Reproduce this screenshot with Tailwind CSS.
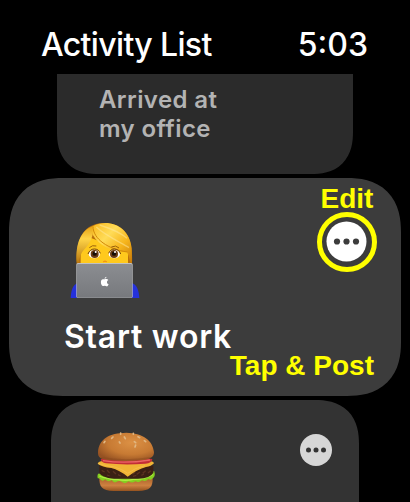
<!DOCTYPE html>
<html lang="en">

<head>
  <meta charset="UTF-8" />
  <meta name="viewport" content="width=device-width, initial-scale=1" />
  <title>Activity List</title>
  <script src="https://cdn.jsdelivr.net/npm/@tailwindcss/browser@4"></script>
</head>

<body class="bg-black font-['Inter',sans-serif]">
  <div class="w-[410px] h-[502px] overflow-hidden flex flex-col items-center">
    <header class="w-full h-[74px] shrink-0 flex justify-between pl-[41px] pr-[42px] pt-[25px] text-white font-medium text-[32px] leading-[40px] whitespace-nowrap">
      <h1 class="tracking-[-0.65px]">Activity List</h1>
      <time>5:03</time>
    </header>

    <main class="flex flex-col items-center gap-1 w-full">
      <!-- previous card -->
      <section class="w-[296px] h-[100px] shrink-0 bg-[#2b2b2b] rounded-b-[42px] [corner-shape:superellipse(1.25)] pl-[42px] pt-[11px]">
        <p class="text-[#b3b3b3] font-semibold text-[24px] leading-[29px] tracking-[0.4px] [font-variant-ligatures:none]">Arrived at<br />my office</p>
      </section>

      <!-- current card -->
      <section class="w-[392px] h-[218px] shrink-0 bg-[#3c3c3c] rounded-[54px] [corner-shape:superellipse(1.25)] flex flex-col">
        <div class="flex justify-between pl-[61px] pr-[24px] h-[134px]">
          <svg class="w-[70px] h-[76px] mt-[44px]" viewBox="30 36 210 228">
            <defs>
              <linearGradient id="hair" x1="0" y1="0" x2="1" y2="1">
                <stop offset="0" stop-color="#f9b91d" />
                <stop offset=".35" stop-color="#ffdc58" />
                <stop offset=".65" stop-color="#f6b51c" />
                <stop offset="1" stop-color="#c77908" />
              </linearGradient>
              <linearGradient id="hairLeft" x1="0" y1="0" x2="0" y2="1">
                <stop offset="0" stop-color="#e5a014" />
                <stop offset=".35" stop-color="#ffd447" />
                <stop offset="1" stop-color="#b97910" />
              </linearGradient>
              <linearGradient id="lid" x1="0" y1="0" x2="0" y2="1">
                <stop offset="0" stop-color="#8b8d91" />
                <stop offset="1" stop-color="#77797d" />
              </linearGradient>
            </defs>
            <path d="M32 264C33 240 40 224 52 220H217C230 224 237 242 238 264Z" fill="#2531dc" />
            <path d="M50 162C46 88 70 39 133 39C194 39 220 82 216 162Z" fill="#b9700d" />
            <path d="M62 162V125Q78 108 93 84Q140 103 204 116V162Z" fill="#ffc91d" />
            <path d="M50 157C46 100 63 61 99 48C103 75 91 100 72 119Q59 132 57 158Z" fill="url(#hairLeft)" />
            <path d="M98 49C146 23 210 50 215 115L216 158H211Q207 137 201 126C153 125 116 105 98 74Z" fill="url(#hair)" />
            <path d="M99 49C99 87 145 118 202 126" fill="none" stroke="#d38a0a" stroke-width="3" />
            <path d="M109 51C134 75 177 95 207 113M119 45C150 55 181 66 201 85" fill="none" stroke="#ffeaa0" stroke-width="4" opacity=".5" />
            <path d="M88 113Q97 104 109 108M154 111Q168 104 177 114" fill="none" stroke="#9b610b" stroke-width="3" />
            <ellipse cx="103" cy="132" rx="17" ry="13" fill="#fff" />
            <ellipse cx="163" cy="132" rx="17" ry="13" fill="#fff" />
            <circle cx="104" cy="132" r="12" fill="#6b3c14" />
            <circle cx="162" cy="132" r="12" fill="#6b3c14" />
            <circle cx="104" cy="131" r="6.500" fill="#170d07" />
            <circle cx="162" cy="131" r="6.500" fill="#170d07" />
            <circle cx="107" cy="126" r="3" fill="#fff" />
            <circle cx="165" cy="126" r="3" fill="#fff" />
            <path d="M84 132Q90 117 103 117Q116 117 121 130M146 130Q151 117 164 117Q177 118 182 132" fill="none" stroke="#71400c" stroke-width="3" />
            <path d="M130 156Q135 151 140 156" fill="none" stroke="#f19313" stroke-width="4" />
            <rect x="49" y="159" width="169" height="105" rx="5" fill="#bfc0c3" />
            <rect x="51" y="162" width="165" height="101" rx="3" fill="url(#lid)" />
            <path d="M134 208C138 206 143 207 145 210C139 213 140 221 146 223C144 228 141 231 138 228Q134 226 130 228C124 230 121 216 124 211C127 206 131 208 134 208ZM133 206Q134 201 140 200Q139 206 133 206Z" fill="#fff" />
          </svg>

          <div class="flex flex-col items-center w-[61px] pt-[6px]">
            <span class="text-[#ffff00] font-['Liberation_Sans',sans-serif] font-bold text-[28px] leading-[30px] pl-px">Edit</span>
            <button class="w-[60px] h-[60px] -mt-[2.5px] rounded-full border-[5px] border-[#ffff00] flex items-center justify-center" aria-label="Edit">
              <svg class="w-[41px] h-[41px] shrink-0" viewBox="0 0 41 41">
                <circle cx="20.500" cy="20.500" r="20" fill="#fff" />
                <g fill="#3c3c3c">
                  <circle cx="11" cy="20.500" r="3.100" />
                  <circle cx="20.500" cy="20.500" r="3.100" />
                  <circle cx="30" cy="20.500" r="3.100" />
                </g>
              </svg>
            </button>
          </div>
        </div>
        <h2 class="pl-[55px] mt-[5px] text-white font-semibold text-[32px] leading-[40px] tracking-[0.75px]">Start work</h2>
        <p class="pr-[27px] -mt-[7px] text-right text-[#ffff00] font-['Liberation_Sans',sans-serif] font-bold text-[28px] leading-[32px]">Tap &amp; Post</p>
      </section>

      <!-- next card -->
      <section class="w-[308px] h-[160px] shrink-0 bg-[#333333] rounded-[44px] [corner-shape:superellipse(1.25)] flex justify-between items-start pl-[45px] pr-[27px]">
        <svg class="w-[60px] h-[62px] mt-[31px]" viewBox="33 33 180 186">
          <defs>
            <radialGradient id="bun" cx=".6" cy=".35" r=".7">
              <stop offset="0" stop-color="#dc9145" />
              <stop offset=".6" stop-color="#c77a33" />
              <stop offset="1" stop-color="#965222" />
            </radialGradient>
            <linearGradient id="base" x1="0" y1="0" x2="0" y2="1">
              <stop offset="0" stop-color="#a86029" />
              <stop offset=".6" stop-color="#ce8140" />
              <stop offset="1" stop-color="#95521f" />
            </linearGradient>
          </defs>
          <path d="M43 171H203C204 202 195 212 160 213H85C51 212 42 201 43 171Z" fill="url(#base)" />
          <path d="M39 161Q36 168 38 175Q44 173 48 180Q54 185 61 178Q69 188 80 180Q86 190 94 186Q103 179 112 187Q121 193 131 184Q141 191 151 184Q162 190 171 181Q182 187 190 177Q198 183 204 174Q212 170 208 154Z" fill="#85cf20" />
          <path d="M43 168Q55 174 66 174Q80 180 95 178Q122 184 145 178Q174 180 203 164" fill="none" stroke="#b0ee42" stroke-width="4" />
          <path d="M43 137Q122 120 205 137V158Q197 174 159 176H87Q48 172 43 158Z" fill="#3b2014" />
          <path d="M50 151l9 5m7-6l8 9m10-5l9 8m6 2l8 4m35-5l8-6m5 6l10-7m8 4l9-8m7 7l8-7M66 165l8 3m70 1l10-3m15 0l8-4" stroke="#5b3320" stroke-width="4" />
          <path d="M38 131Q41 122 57 123H190Q205 123 207 130Q199 139 183 141Q157 148 128 170Q103 150 79 144Q51 141 38 131Z" fill="#f0b435" />
          <path d="M40 131Q63 138 89 141Q111 147 128 160Q150 143 180 137" fill="none" stroke="#f6bf48" stroke-width="3" />
          <path d="M47 117Q122 106 202 117Q201 130 181 131Q120 136 63 130Q48 127 47 117Z" fill="#c32e37" />
          <path d="M54 122Q119 132 195 120" fill="none" stroke="#ea6664" stroke-width="4" />
          <path d="M39 97C41 57 72 39 124 38C173 39 204 61 207 97C207 112 196 119 164 121Q122 125 81 121C48 120 38 113 39 97Z" fill="url(#bun)" />
          <path d="M48 113Q122 126 199 113" fill="none" stroke="#87451d" stroke-width="4" opacity=".4" />
          <path d="M107 39v4m38-3v3m-61 8l-4 4m38-4l3 5m38-6l5 3m-104 11l-3 4m46-2l2 3m43-4l4 3m26-6l4 3M152 75l-2 6" stroke="#e0b681" stroke-width="5" stroke-linecap="round" />
        </svg>
        <button class="mt-[34px]" aria-label="More">
          <svg class="w-[32px] h-[32px]" viewBox="0 0 32 32">
            <circle cx="16" cy="16" r="16" fill="#d6d6d6" />
            <g fill="#333333">
              <circle cx="8.500" cy="16" r="2.500" />
              <circle cx="16" cy="16" r="2.500" />
              <circle cx="23.500" cy="16" r="2.500" />
            </g>
          </svg>
        </button>
      </section>
    </main>
  </div>
</body>

</html>
